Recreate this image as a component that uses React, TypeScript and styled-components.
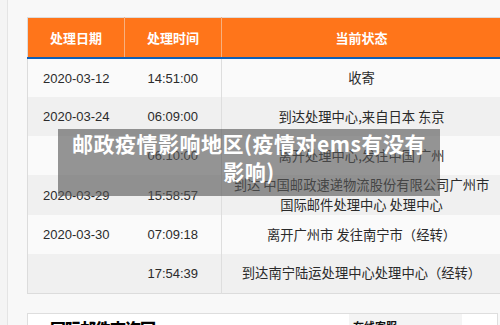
import React from "react";
import styled, { createGlobalStyle } from "styled-components";

interface TrackRow {
  date?: string;
  time: string;
  status: React.ReactNode;
}

const rows: TrackRow[] = [
  { date: "2020-03-12", time: "14:51:00", status: "收寄" },
  { date: "2020-03-24", time: "06:09:00", status: "到达处理中心,来自日本 东京" },
  { time: "06:10:00", status: "离开处理中心,发往中国 广州" },
  {
    date: "2020-03-29",
    time: "15:58:57",
    status: (
      <>
        到达 中国邮政速递物流股份有限公司广州市
        <br />
        国际邮件处理中心 处理中心
      </>
    ),
  },
  { date: "2020-03-30", time: "07:09:18", status: "离开广州市 发往南宁市（经转）" },
  { time: "17:54:39", status: "到达南宁陆运处理中心处理中心（经转）" },
];

const GlobalStyle = createGlobalStyle`
  html, body {
    margin: 0;
    padding: 0;
    background: #f4f4f4;
    overflow: hidden;
  }
  body {
    font-family: "Liberation Sans", "Noto Sans CJK SC", sans-serif;
    color: #333;
  }
`;

const Page = styled.div`
  width: 500px;
  height: 325px;
  overflow: hidden;
  padding-left: 7px;
  box-sizing: border-box;
`;

const Panel = styled.main`
  height: 100%;
  background: #f8f8f8;
  border-left: 1px solid #e4e4e4;
  padding: 17px 0 0 19px;
  box-sizing: border-box;
`;

const TableWrap = styled.section`
  position: relative;
  width: 471px;
`;

const Table = styled.table`
  width: 100%;
  border-collapse: collapse;
  table-layout: fixed;
  border: 1px solid #dcdcdc;
  font-size: 13px;
`;

const HeadCell = styled.th<{ $w: number }>`
  width: ${(p) => p.$w}px;
  height: 39px;
  padding: 0;
  background: #ff751a;
  color: #fff;
  font-family: "Noto Sans CJK SC", sans-serif;
  font-weight: 700;
  font-size: 13px;
  border-left: 1px solid #f7b07f;
  border-bottom: 2px solid #0d5eb5;
  &:first-child {
    border-left: none;
  }
`;

const BodyRow = styled.tr`
  height: 39px;
  background: #fafafa;
  &:nth-child(even) {
    background: #f0f0f0;
  }
`;

const Cell = styled.td<{ $divider?: boolean }>`
  padding: 0 2px;
  text-align: center;
  vertical-align: middle;
  color: #2b2b2b;
  border-left: ${(p) => (p.$divider ? "1px solid #dedede" : "none")};
`;

const StatusCell = styled(Cell)`
  font-family: "Noto Sans CJK SC", sans-serif;
  font-size: 13.3px;
  line-height: 20px;
  color: #2a2a2a;
  white-space: nowrap;
`;

const Caption = styled.div`
  position: absolute;
  left: 31px;
  top: 112px;
  width: 382px;
  height: 67px;
  box-sizing: border-box;
  padding: 0 4px;
  background: rgba(85, 85, 85, 0.62);
  color: #fff;
  font-family: "Noto Sans CJK SC", sans-serif;
  font-weight: 700;
  font-size: 21px;
  line-height: 28px;
  letter-spacing: 0.5px;
  text-align: center;
`;

const Footer = styled.section`
  margin-top: 19px;
  width: 471px;
  height: 40px;
  background: #fff;
  border: 1px solid #dedede;
  display: flex;
  justify-content: space-between;
  align-items: flex-start;
  padding-left: 22px;
  box-sizing: border-box;
`;

const FooterTitle = styled.div`
  font-family: "Noto Sans CJK SC", sans-serif;
  font-weight: 900;
  font-size: 16px;
  color: #000;
  margin-top: 2px;
  letter-spacing: -1px;
`;

const ServiceTab = styled.div`
  width: 109px;
  margin-right: 35px;
  padding: 4px 0 0 4px;
  background: #f4f4f4;
  font-family: "Noto Sans CJK SC", sans-serif;
  font-size: 11px;
  font-weight: 700;
  color: #111;
`;

export default function App() {
  return (
    <>
      <GlobalStyle />
      <Page>
        <Panel>
          <TableWrap>
            <Table>
              <thead>
                <tr>
                  <HeadCell $w={96}>处理日期</HeadCell>
                  <HeadCell $w={96}>处理时间</HeadCell>
                  <HeadCell $w={279}>当前状态</HeadCell>
                </tr>
              </thead>
              <tbody>
                {rows.map((r, i) => (
                  <BodyRow key={i}>
                    <Cell>{r.date ?? ""}</Cell>
                    <Cell>{r.time}</Cell>
                    <StatusCell $divider>{r.status}</StatusCell>
                  </BodyRow>
                ))}
              </tbody>
            </Table>
            <Caption>
              邮政疫情影响地区(疫情对ems有没有
              <br />
              影响)
            </Caption>
          </TableWrap>
          <Footer>
            <FooterTitle>国际邮件查询回</FooterTitle>
            <ServiceTab>在线客服</ServiceTab>
          </Footer>
        </Panel>
      </Page>
    </>
  );
}
